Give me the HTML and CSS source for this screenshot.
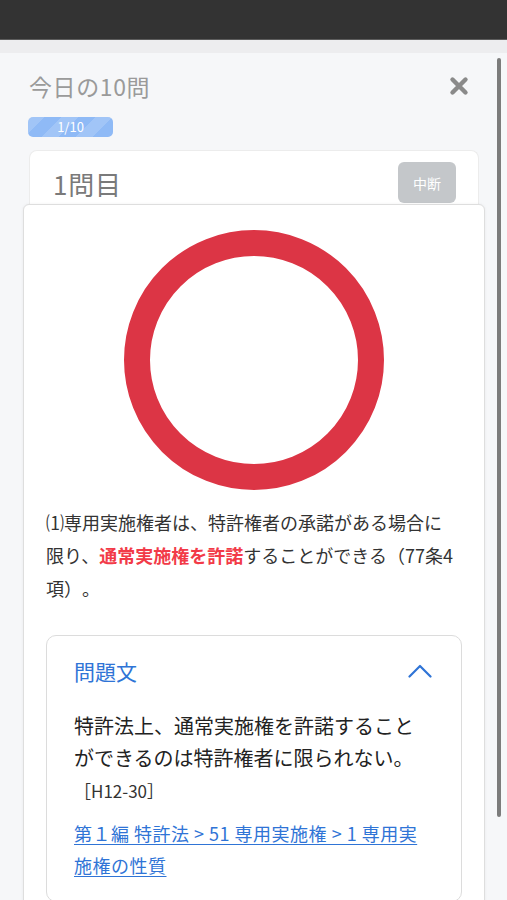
FILE: index.html
```html
<!DOCTYPE html>
<html lang="ja">
<head>
<meta charset="utf-8">
<title>今日の10問</title>
<link rel="stylesheet" href="styles.css">
</head>
<body>
<div class="topbar"></div>
<div class="strip"></div>
<div class="modal">
  <div class="modal-head">
    <h1 class="title">今日の10問</h1>
    <svg class="close" width="20" height="20" viewBox="0 0 20 20" aria-hidden="true">
      <path d="M3.5 3.5 L16.5 16.5 M16.5 3.5 L3.5 16.5" stroke="#8a8a8a" stroke-width="4.4" stroke-linecap="round" fill="none"/>
    </svg>
  </div>
  <div class="progress"><div class="bar">1/10</div></div>
  <div class="stack">
    <div class="qcard">
      <span class="qnum">1問目</span>
      <button class="stop">中断</button>
    </div>
    <div class="result">
      <div class="mark">
        <svg width="262" height="262" viewBox="0 0 262 262" aria-hidden="true">
          <circle cx="131" cy="131" r="117" stroke="#dc3545" stroke-width="26" fill="none"/>
        </svg>
      </div>
      <p class="explain">⑴専用実施権者は、特許権者の承諾がある場合に限り、<span class="hl">通常実施権を許諾</span>することができる（77条4項）。</p>
      <div class="qbox">
        <div class="qbox-head">
          <span class="qbox-title">問題文</span>
          <svg class="chev" width="24" height="14" viewBox="0 0 24 14" aria-hidden="true">
            <path d="M1.5 12.5 L12 2 L22.5 12.5" stroke="#2f74d6" stroke-width="2.2" fill="none" stroke-linecap="round" stroke-linejoin="round"/>
          </svg>
        </div>
        <p class="qtext">特許法上、通常実施権を許諾することができるのは特許権者に限られない。</p>
        <div class="qsrc">［H12-30］</div>
        <a class="qlink" href="#">第１編 特許法 &gt; 51 専用実施権 &gt; 1 専用実施権の性質</a>
      </div>
    </div>
  </div>
</div>
<div class="scrollbar"></div>
</body>
</html>
```

FILE: styles.css
```css
html, body {
  margin: 0;
  padding: 0;
}
body {
  width: 507px;
  height: 900px;
  overflow: hidden;
  background: #f6f7f9;
  font-family: "Noto Sans CJK JP", "Noto Sans", sans-serif;
  color: #333;
  position: relative;
  text-spacing-trim: space-all;
}
.topbar {
  height: 39px;
  background: #333333;
  border-bottom: 1px solid #5c5c5c;
}
.strip {
  height: 13px;
  background: #ededef;
}
.modal {
  padding: 0 22px 0 23px;
  background: #f6f7f9;
}
.modal-head {
  display: flex;
  align-items: center;
  justify-content: space-between;
  padding: 17px 16px 0 6px;
}
.title {
  margin: 0;
  font-size: 23px;
  font-weight: 400;
  line-height: 32px;
  color: #9a9a9a;
  letter-spacing: 0.6px;
}
.close {
  display: block;
  margin-top: 0;
}
.progress {
  margin: 15px 0 0 5px;
}
.bar {
  width: 85px;
  height: 20px;
  border-radius: 5px;
  background-color: #8fbaf6;
  background-image: repeating-linear-gradient(135deg, rgba(255,255,255,0.16) 0 12px, rgba(255,255,255,0) 12px 24px);
  color: #ffffff;
  font-size: 13px;
  line-height: 20px;
  text-align: center;
}
.stack {
  margin-top: 13px;
}
.qcard {
  margin: 0 6px;
  background: #ffffff;
  border: 1px solid #ececec;
  border-bottom: none;
  border-radius: 8px 8px 0 0;
  display: flex;
  align-items: center;
  justify-content: space-between;
  padding: 11px 22px 12px 23px;
}
.qnum {
  font-size: 26px;
  color: #7a7a7a;
  line-height: 34px;
  margin-top: 2px;
  letter-spacing: 0.8px;
}
.stop {
  width: 58px;
  height: 41px;
  border: none;
  border-radius: 6px;
  background: #c4c7ca;
  color: #ffffff;
  font-family: "Noto Sans CJK JP", sans-serif;
  font-size: 14px;
  padding: 0;
}
.result {
  margin-top: -11px;
  position: relative;
  background: #ffffff;
  border: 1px solid #dedede;
  border-radius: 6px;
  box-shadow: 0 0 3px rgba(0,0,0,0.06);
  padding: 25px 22px 40px 22px;
  min-height: 700px;
}
.mark {
  display: flex;
  justify-content: center;
}
.mark svg {
  display: block;
  margin-top: -1px;
}
.explain {
  margin: 15px 6px 0 0;
  font-size: 18px;
  line-height: 33px;
  color: #333;
}
.hl {
  color: #f23a48;
  font-weight: 700;
}
.qbox {
  margin-top: 30px;
  border: 1px solid #dcdcdc;
  border-radius: 10px;
  padding: 20px 28px 20px 27px;
}
.qbox-head {
  display: flex;
  align-items: center;
  justify-content: space-between;
  height: 30px;
}
.qbox-title {
  font-size: 21px;
  color: #2f74d6;
  line-height: 30px;
}
.chev {
  display: block;
  margin-right: 1px;
}
.qtext {
  margin: 24px 0 0 0;
  font-size: 20px;
  line-height: 32px;
  color: #222;
}
.qsrc {
  font-size: 17px;
  line-height: 34px;
  color: #333;
}
.qlink {
  display: block;
  margin-top: 9px;
  font-size: 18px;
  line-height: 32px;
  letter-spacing: 0.5px;
  color: #2f74d6;
  text-decoration: underline;
  text-underline-offset: 3px;
}
.scrollbar {
  position: absolute;
  left: 497px;
  top: 58px;
  width: 4px;
  height: 759px;
  border-radius: 2px;
  background: #7c7c7c;
}
```
